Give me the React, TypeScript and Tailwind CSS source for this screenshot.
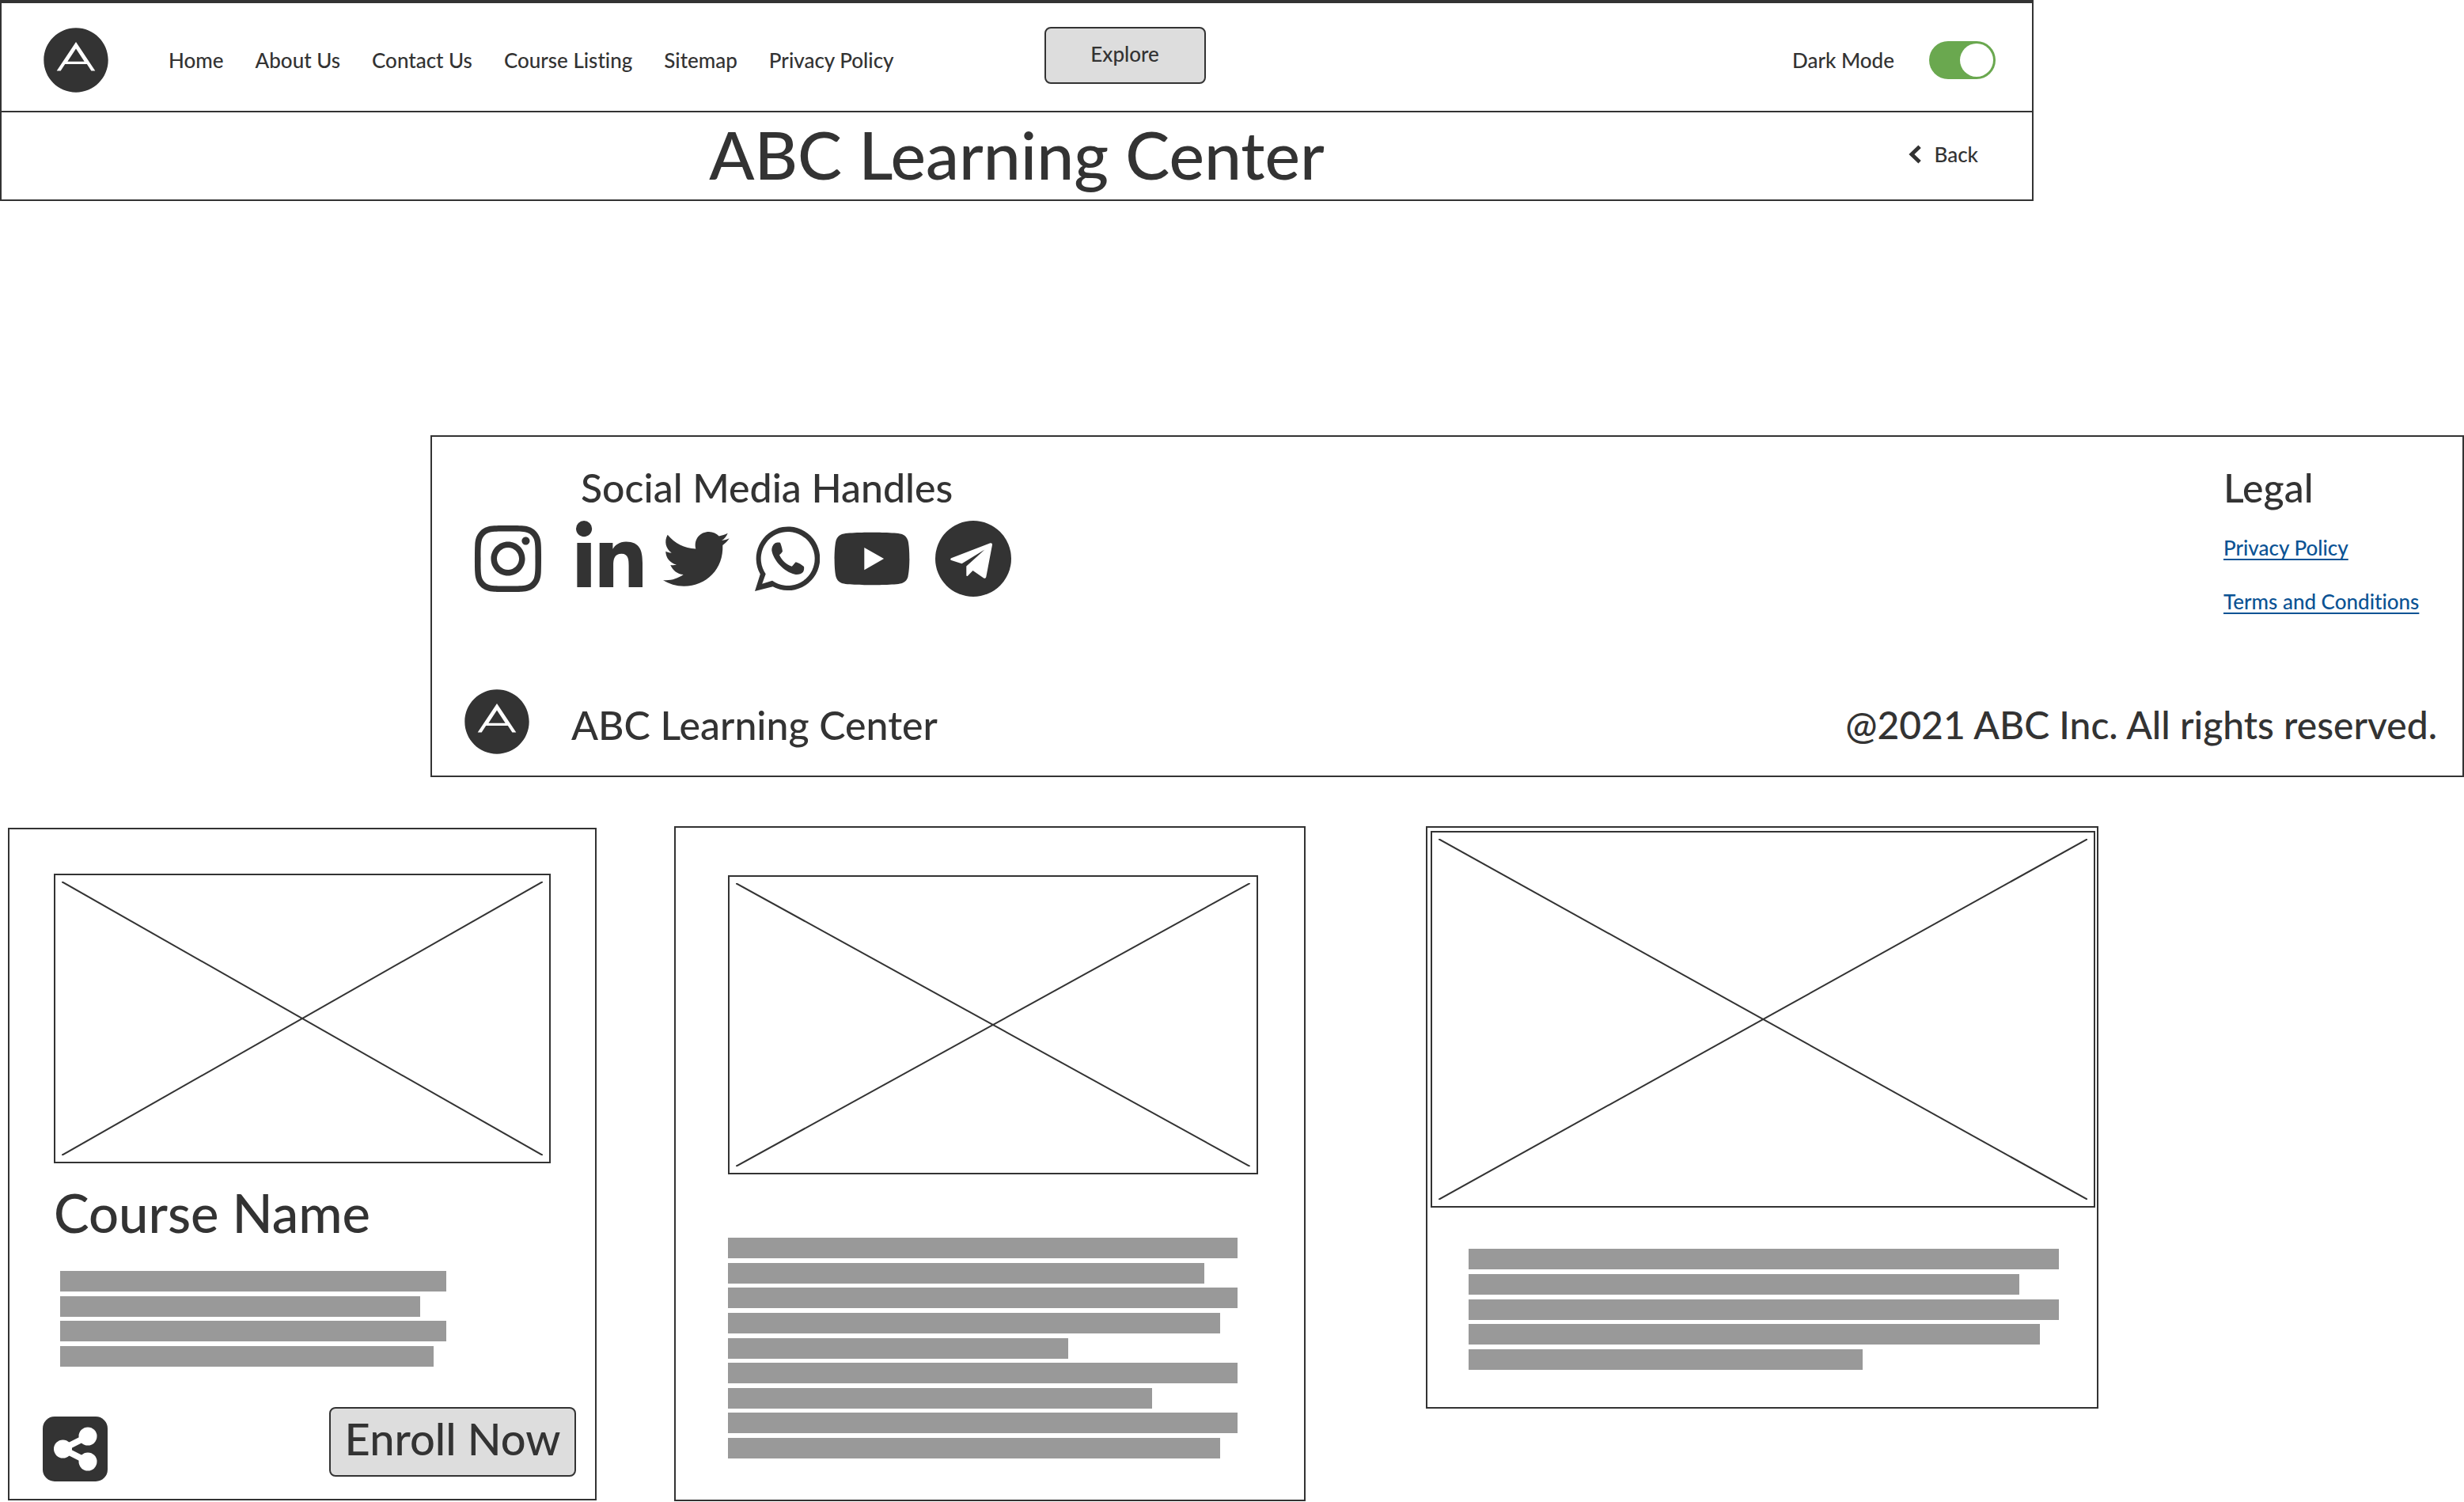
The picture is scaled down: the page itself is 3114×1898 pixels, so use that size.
import React from "react";
import { FaAdn, FaInstagram, FaLinkedinIn, FaYoutube } from "react-icons/fa";

type IconProps = { className?: string };

function TwitterIcon({ className }: IconProps) {
  return (
    <svg viewBox="0 0 84 84" fill="currentColor" className={className} aria-hidden="true">
      <path d="M0 69C9 70 18 67.500 25.700 62C18 61.500 12.500 57 9.300 50C12 50.500 14.500 50.400 17 49.600C9 47.500 3.300 41 3.300 32.700C5.600 33.800 8 34.500 10.700 34.600C3.500 29.500 1 20 5.700 11.700C14.500 22.500 27 28.800 41.300 29.500C38.500 17 47 8 58 8C63 8 67.500 10.200 70.700 13.400C74.600 12.600 78.300 11.300 81.700 9.700C80.300 13.500 77.600 16.800 74.100 18.900C77.500 18.500 80.800 17.600 83.700 16.300C81.500 19.700 78.600 22.700 75.300 25C76.500 55 55 76.700 26.300 76.700C16.500 76.700 7.500 73.900 0 69Z" />
    </svg>
  );
}

function WhatsAppIcon({ className }: IconProps) {
  return (
    <svg viewBox="0 0 82 82" fill="currentColor" className={className} aria-hidden="true">
      <path
        fillRule="evenodd"
        d="M0 82L6.800 60.500A40.300 40.300 0 1 1 22.700 76.200ZM9.200 72.700L13.700 60.300A34 34 0 1 1 22 68.700Z"
      />
      <path d="M25.300 21.500C27 20.300 30 20.300 32 20.700C33.500 24.200 34.500 28 35 31.700C34 33.500 32.500 35 31 36.300C34 43 40 48.500 46.700 50.700C48.500 49.300 50 47 51.700 45.300C55.500 46.500 59 48.500 62 51C62.500 53.500 62 56 61 57.700C58.500 60.500 54.500 61.500 50.500 60.800C37 57.500 23.500 43.500 21.300 30.500C21.200 27 22.500 23.500 25.300 21.500Z" />
    </svg>
  );
}

function TelegramIcon({ className }: IconProps) {
  return (
    <svg viewBox="0 0 96 96" className={className} aria-hidden="true">
      <circle cx="48" cy="48" r="48" fill="currentColor" />
      <path
        fill="#fff"
        d="M20.200 47.300L69.500 28.300C71 27.900 72.200 28.800 72 30.500L64.300 71C63.900 72.700 62.600 73.200 61.200 72.400L47.500 63L41.200 69.600C40.200 70.500 39.300 70.200 39.300 69V57.600L62.500 36.500L33.500 54.300L20.300 50C18.800 49.400 18.800 48 20.200 47.300Z"
      />
    </svg>
  );
}

function ShareIcon({ className }: IconProps) {
  return (
    <svg viewBox="0 0 82 82" className={className} aria-hidden="true">
      <rect width="82" height="82" rx="15" fill="currentColor" />
      <path d="M57 25L25.500 41L57 57" fill="none" stroke="#fff" strokeWidth="8" />
      <circle cx="25.500" cy="41" r="11.500" fill="#fff" />
      <circle cx="57" cy="25" r="11.500" fill="#fff" />
      <circle cx="57" cy="57" r="11.500" fill="#fff" />
    </svg>
  );
}

const navItems = ["Home", "About Us", "Contact Us", "Course Listing", "Sitemap", "Privacy Policy"];

const socials = [
  { label: "Instagram", Icon: FaInstagram, className: "size-24" },
  { label: "LinkedIn", Icon: FaLinkedinIn, className: "ml-8 size-24" },
  { label: "Twitter", Icon: TwitterIcon, className: "ml-5 size-[84px]" },
  { label: "WhatsApp", Icon: WhatsAppIcon, className: "ml-8 size-[82px]" },
  { label: "YouTube", Icon: FaYoutube, className: "ml-4 size-[100px]" },
  { label: "Telegram", Icon: TelegramIcon, className: "ml-[30px] size-24" },
];

function ImagePlaceholder({ className }: { className: string }) {
  return (
    <div role="img" aria-label="Image placeholder" className={`border-2 border-[#333] p-2 ${className}`}>
      <svg className="block h-full w-full" stroke="#333" strokeWidth="2" aria-hidden="true">
        <line x1="0" y1="0" x2="100%" y2="100%" />
        <line x1="0" y1="100%" x2="100%" y2="0" />
      </svg>
    </div>
  );
}

function TextLines({ widths, className }: { widths: number[]; className: string }) {
  return (
    <div aria-hidden="true" className={`flex flex-col justify-between ${className}`}>
      {widths.map((w, i) => (
        <div key={i} className="h-[26px] bg-[#999]" style={{ width: `${w}%` }} />
      ))}
    </div>
  );
}

function Header() {
  return (
    <header className="w-[82.530%] border-2 border-t-4 border-[#333]">
      <div className="flex h-[136px] items-center pt-2 pr-[46px] pl-[52px]">
        <FaAdn className="size-[84px]" title="ABC Learning Center" />
        <nav className="ml-[75px] flex gap-10">
          {navItems.map((item) => (
            <a key={item} href="#">
              {item}
            </a>
          ))}
        </nav>
        <button
          type="button"
          className="mb-3 ml-[190px] h-[72px] w-[204px] rounded-lg border-2 border-[#333] bg-[#ddd] pb-1"
        >
          Explore
        </button>
        <label className="ml-auto flex items-center gap-11">
          Dark Mode
          <input
            type="checkbox"
            role="switch"
            defaultChecked
            className="flex h-12 w-[84px] appearance-none items-center rounded-full bg-[#999] px-[3px] before:size-[42px] before:rounded-full before:bg-white checked:justify-end checked:bg-[#6aa84f]"
          />
        </label>
      </div>
      <div className="grid h-28 grid-cols-[1fr_auto_1fr] items-center border-t-2 border-[#333] pb-1">
        <h1 className="col-start-2 text-[84px] leading-none">ABC Learning Center</h1>
        <a href="#" className="mr-[68px] flex items-center gap-4 justify-self-end">
          <svg viewBox="0 0 16 24" className="h-6 w-4" fill="#333" aria-hidden="true">
            <path d="M12.400 0.600L15.800 4L7.400 12L15.800 20L12.400 23.400L0.400 12Z" />
          </svg>
          Back
        </a>
      </div>
    </header>
  );
}

function Footer() {
  return (
    <footer className="mt-[296px] ml-auto flex h-[432px] w-[82.530%] flex-col justify-between border-2 border-[#333] pt-[34px] pr-8 pb-[26px] pl-10">
      <div className="flex justify-between">
        <section className="pl-2">
          <h2 className="pl-[140px] text-[50px] leading-[60px]">Social Media Handles</h2>
          <div className="mt-2.5 flex items-center">
            {socials.map(({ label, Icon, className }) => (
              <a key={label} href="#" aria-label={label} className={className}>
                <Icon className="size-full" />
              </a>
            ))}
          </div>
        </section>
        <section className="mr-2 w-[262px]">
          <h2 className="text-[50px] leading-[60px]">Legal</h2>
          <ul className="mt-[30px] flex flex-col gap-9 whitespace-nowrap text-[#0b5394] underline underline-offset-4">
            <li>
              <a href="#">Privacy Policy</a>
            </li>
            <li>
              <a href="#">Terms and Conditions</a>
            </li>
          </ul>
        </section>
      </div>
      <div className="flex items-center">
        <FaAdn className="size-[84px]" title="ABC Learning Center" />
        <p className="ml-[52px] pt-2 text-[50px] leading-[60px]">ABC Learning Center</p>
        <p className="ml-auto pt-2 text-5xl leading-[60px]">@2021 ABC Inc. All rights reserved.</p>
      </div>
    </footer>
  );
}

function CourseCards() {
  return (
    <main className="mt-[62px] flex items-start pl-2.5">
      <article className="mt-0.5 flex h-[850px] w-[23.970%] flex-col border-2 border-[#333]">
        <ImagePlaceholder className="mx-14 mt-14 h-[366px]" />
        <h2 className="mt-[22px] ml-14 text-[67px] leading-20">Course Name</h2>
        <TextLines widths={[100, 93.3, 100, 96.7]} className="mt-[34px] ml-16 h-[121px] w-[488px]" />
        <div className="mt-auto mb-[22px] flex items-end justify-between pr-6 pl-[42px]">
          <button type="button" aria-label="Share">
            <ShareIcon className="size-[82px]" />
          </button>
          <button
            type="button"
            className="mb-1.5 h-[88px] w-[312px] rounded-lg border-2 border-[#333] bg-[#ddd] pb-2 text-[56px] leading-none"
          >
            Enroll Now
          </button>
        </div>
      </article>
      <article className="ml-[98px] h-[853px] w-[25.700%] border-2 border-[#333] pt-[60px] pr-[58px] pl-[66px]">
        <ImagePlaceholder className="h-[378px]" />
        <TextLines
          widths={[100, 93.5, 100, 96.6, 66.8, 100, 83.3, 100, 96.6]}
          className="mt-20 h-[279px] w-[644px]"
        />
      </article>
      <article className="ml-[152px] h-[736px] w-[27.400%] border-2 border-[#333] p-1 pr-0.5">
        <ImagePlaceholder className="h-[476px]" />
        <TextLines widths={[100, 93.3, 100, 96.8, 66.8]} className="mt-[52px] ml-12 h-[153px] w-[746px]" />
      </article>
    </main>
  );
}

export default function App() {
  return (
    <div className="min-h-screen bg-white font-['Lato',sans-serif] text-[26px] leading-8 font-medium text-[#333] [font-variant-ligatures:none]">
      <Header />
      <Footer />
      <CourseCards />
    </div>
  );
}
